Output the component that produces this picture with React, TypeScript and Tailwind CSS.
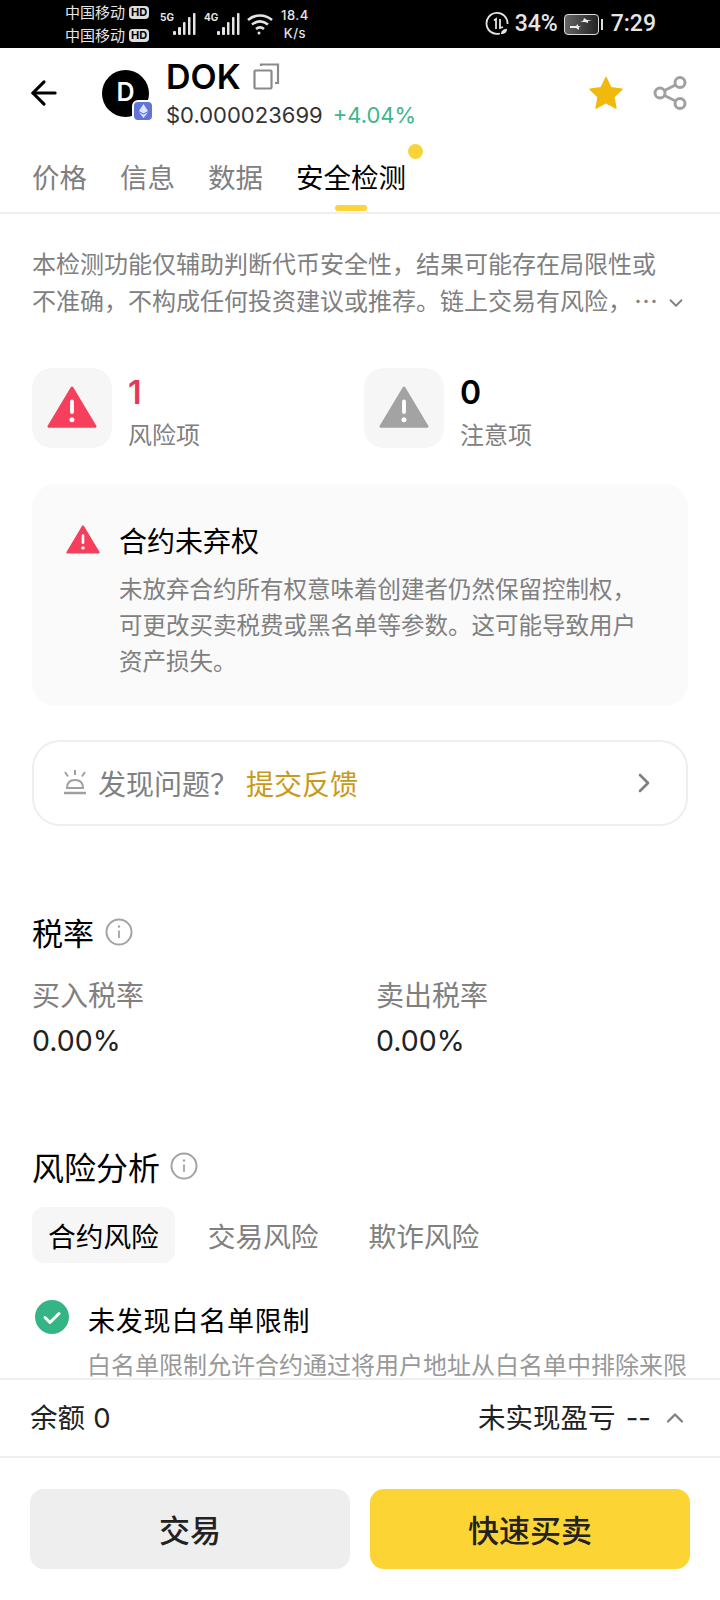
import { ArrowLeft, ChevronDown, ChevronRight, ChevronUp } from "lucide-react";

const cjk = "font-['Noto_Sans_CJK_SC','Noto_Sans',sans-serif]";
const latin = "font-['Inter','Noto_Sans_CJK_SC',sans-serif]";

function Warn({ size, color = "#f53f5c" }: { size: number; color?: string }) {
  return (
    <svg width={size} height={(size * 45) / 52} viewBox="0 0 52 45">
      <path d="M26 2 L50 42 H2 Z" fill={color} stroke={color} strokeWidth="3" strokeLinejoin="round" />
      <rect x="24" y="14" width="4" height="15" rx="2" fill="#fff" />
      <circle cx="26" cy="35" r="2.6" fill="#fff" />
    </svg>
  );
}

function Info() {
  return (
    <svg width="28" height="28" viewBox="0 0 28 28" fill="none" stroke="#a3a3a3" strokeWidth="2">
      <circle cx="14" cy="14" r="12.5" />
      <path d="M14 12.5V20" strokeWidth="1.8" />
      <circle cx="14" cy="8.5" r="1.2" fill="#a3a3a3" stroke="none" />
    </svg>
  );
}

function Signal() {
  return (
    <svg width="23" height="22" viewBox="0 0 23 22" fill="#e5e5e5">
      <rect x="0" y="18" width="3" height="4" rx="1" />
      <rect x="5" y="14" width="3" height="8" rx="1" />
      <rect x="10" y="9" width="2.500" height="13" rx="1" />
      <rect x="15" y="4" width="2.500" height="18" rx="1" />
      <rect x="20" y="0" width="2.500" height="22" rx="1" />
    </svg>
  );
}

function Hd() {
  return (
    <span className="rounded-[4px] bg-[#ddd] px-[2px] text-[11px] leading-[13px] font-bold text-black">HD</span>
  );
}

function StatusBar() {
  return (
    <div className={`flex h-12 shrink-0 items-center bg-black pr-[64px] pl-[65px] text-[#e5e5e5] ${latin}`}>
      <div className="flex w-[88px] flex-col gap-[3px] text-[15px] leading-[20px]">
        <div className="flex items-center gap-[4px] whitespace-nowrap">中国移动 <Hd /></div>
        <div className="flex items-center gap-[4px] whitespace-nowrap">中国移动 <Hd /></div>
      </div>
      <span className="mt-[-14px] ml-[7px] w-[13px] text-[10px] font-bold">5G</span>
      <Signal />
      <span className="mt-[-14px] ml-[8px] w-[13px] text-[10px] font-bold">4G</span>
      <Signal />
      <svg className="ml-[6px]" width="28" height="24" viewBox="0 0 28 24" fill="none" stroke="#e5e5e5" strokeWidth="2.6">
        <path d="M2 8c7-6 17-6 24 0" />
        <path d="M6 12.500c5-4 11-4 16 0" />
        <path d="M10 17c2.500-2 5.500-2 8 0" />
        <circle cx="13" cy="21" r="1.500" fill="#e5e5e5" stroke="none" />
      </svg>
      <div className="ml-[7px] flex flex-col items-center text-[13px] leading-[18px] font-medium tracking-[0.5px]">
        <span>18.4</span>
        <span>K/s</span>
      </div>
      <div className="ml-auto flex items-center font-['Roboto',sans-serif] text-[23px] font-medium">
        <svg width="24" height="24" viewBox="0 0 24 24" fill="none" stroke="#e5e5e5" strokeWidth="1.800">
          <path d="M15 21.500A10.500 10.500 0 1 1 22.500 12" />
          <path d="M9 8.500l2-1.500v10M15 7v9l3-1" strokeWidth="1.800" />
          <path d="M16 22c0-3 2-5 6-5 0 3-2 5-6 5z" fill="#e5e5e5" stroke="none" />
        </svg>
        <span className="ml-[6px]">34%</span>
        <div className="ml-[6px] flex h-[21px] w-[35px] items-center justify-center rounded-[4px] border-[1.500px] border-[#ddd] bg-[linear-gradient(90deg,#666,#222)]">
          <svg width="26" height="12" viewBox="0 0 26 12" fill="#eee">
            <path d="M2 8h6l2-2v2h3l-2 1v3l-3-2H2zM12 4l3-1 1-3 3 2h5l-4 1v2l-3-1z" />
          </svg>
        </div>
        <span className="ml-[2px] h-[11px] w-[2px] bg-[#ddd]" />
        <span className="ml-[8px]">7:29</span>
      </div>
    </div>
  );
}

function Header() {
  return (
    <div className="flex h-[90px] shrink-0 items-center pr-[33px] pl-[25px]">
      <ArrowLeft size={38} strokeWidth={2} className="text-black" />
      <div className="relative ml-[39px] flex h-[47px] w-[47px] items-center justify-center rounded-full bg-black">
        <span className={`text-[25px] font-semibold text-white ${latin}`}>D</span>
        <div className="absolute top-[30px] left-[30px] flex h-[22px] w-[22px] items-center justify-center rounded-[6px] border-[2px] border-white bg-[#6274d8]">
          <svg width="9" height="14" viewBox="0 0 9 14" fill="#dfe5ff">
            <path d="M4.500 0L9 7l-4.500 2.500L0 7zM0 8.300l4.500 2.500L9 8.300 4.500 14z" />
          </svg>
        </div>
      </div>
      <div className="ml-[17px] flex flex-col">
        <div className="flex items-center">
          <span className={`text-[34px] leading-[38px] font-semibold text-black ${latin}`}>DOK</span>
          <svg className="ml-[12px]" width="27" height="27" viewBox="0 0 27 27" fill="none" stroke="#8a8a8a" strokeWidth="2.200">
            <rect x="1.500" y="7.500" width="17" height="18" rx="1" />
            <path d="M8 3V1.500h17V20h-3" />
          </svg>
        </div>
        <div className={`mt-[5px] flex items-center text-[22px] leading-[28px] ${latin}`}>
          <span className="text-[#333]">$0.000023699</span>
          <span className="ml-[10px] text-[#3fb58c]">+4.04%</span>
        </div>
      </div>
      <svg className="ml-auto" width="36" height="34" viewBox="0 0 24 23" fill="#f0b90b">
        <path d="M12 1l3.300 7 7.500.9-5.500 5.200 1.400 7.600L12 18l-6.700 3.700 1.400-7.600L1.200 8.900 8.700 8z" stroke="#f0b90b" strokeWidth="1" strokeLinejoin="round" />
      </svg>
      <svg className="ml-[29px]" width="34" height="34" viewBox="0 0 34 34" fill="none" stroke="#a0a0a0" strokeWidth="3">
        <circle cx="7" cy="17" r="5" />
        <circle cx="27" cy="6.500" r="5" />
        <circle cx="27" cy="27.500" r="5" />
        <path d="M11.500 14.500L22.500 9M11.500 19.500L22.500 25" />
      </svg>
    </div>
  );
}

function Tabs() {
  return (
    <div className="relative flex h-[76px] shrink-0 gap-[33px] border-b-2 border-[#eeeeee] pt-[18px] pl-[32px] text-[27.500px] leading-[40px] text-[#808080]">
      <span>价格</span>
      <span>信息</span>
      <span>数据</span>
      <span className="relative text-black">
        安全检测
        <span className="absolute top-[-12px] right-[-17px] h-[15px] w-[15px] rounded-full bg-[#f8d33a]" />
        <span className="absolute top-[49px] left-[39px] h-[6px] w-[32px] rounded-full bg-[#fcd535]" />
      </span>
    </div>
  );
}

function Stat({ value, label, color, warnColor }: { value: string; label: string; color: string; warnColor: string }) {
  return (
    <div className="flex w-[332px] shrink-0 gap-[16px]">
      <div className="flex h-[80px] w-[80px] items-center justify-center rounded-[20px] bg-[#f6f6f6]">
        <Warn size={50} color={warnColor} />
      </div>
      <div className="flex flex-col pt-[3px]">
        <span className={`text-[32px] leading-[44px] font-semibold ${latin}`} style={{ color }}>{value}</span>
        <span className="mt-[3px] text-[24px] leading-[32px] text-[#808080]">{label}</span>
      </div>
    </div>
  );
}

export default function App() {
  return (
    <div className={`flex h-[1600px] w-[720px] flex-col overflow-hidden bg-white ${cjk}`}>
      <StatusBar />
      <Header />
      <Tabs />
      <main className="min-h-0 flex-1 overflow-hidden px-[32px]">
        <div className="relative mt-[30px] text-[24px] leading-[37px] text-[#808080]">
          <p className="whitespace-nowrap">本检测功能仅辅助判断代币安全性，结果可能存在局限性或</p>
          <p className="whitespace-nowrap">不准确，不构成任何投资建议或推荐。链上交易有风险，<span className="ml-[2px]">…</span></p>
          <ChevronDown size={22} strokeWidth={2} className="absolute top-[48px] right-[1px] text-[#808080]" />
        </div>
        <div className="mt-[50px] flex">
          <Stat value="1" label="风险项" color="#e5395a" warnColor="#f53f5c" />
          <Stat value="0" label="注意项" color="#000000" warnColor="#a3a3a3" />
        </div>
        <div className="mt-[34px] h-[222px] rounded-[24px] bg-[#fafafa] pt-[38px] pr-[30px] pl-[34px]">
          <div className="flex items-center gap-[19px]">
            <Warn size={34} />
            <span className="text-[28px] leading-[36px] text-black">合约未弃权</span>
          </div>
          <p className="mt-[12px] ml-[53px] w-[525px] text-[23.500px] leading-[36px] text-[#808080]">
            未放弃合约所有权意味着创建者仍然保留控制权，可更改买卖税费或黑名单等参数。这可能导致用户资产损失。
          </p>
        </div>
        <div className="mt-[34px] flex h-[86px] items-center rounded-[28px] border-2 border-[#eeeeee] pr-[26px] pl-[29px] text-[28px]">
          <svg width="24" height="28" viewBox="0 0 24 28" fill="none" stroke="#a0a0a0" strokeWidth="2">
            <path d="M12 1v5M2 3l3 4.500M22 3l-3 4.500" />
            <path d="M4 19c0-5 3-8 8-8s8 3 8 8z" />
            <path d="M1 24h22" strokeWidth="2.500" />
          </svg>
          <span className="ml-[11px] text-[#808080]">发现问题？</span>
          <span className="ml-[8px] text-[#c99a1a]">提交反馈</span>
          <ChevronRight size={32} strokeWidth={2} className="ml-auto text-[#808080]" />
        </div>
        <div className="mt-[84px] flex items-center gap-[11px]">
          <span className="text-[31px] leading-[44px] text-black">税率</span>
          <Info />
        </div>
        <div className="mt-[20px] flex">
          <div className="w-[344px]">
            <div className="text-[28px] leading-[40px] text-[#808080]">买入税率</div>
            <div className={`mt-[7px] text-[28.500px] leading-[40px] text-[#222] ${latin}`}>0.00%</div>
          </div>
          <div>
            <div className="text-[28px] leading-[40px] text-[#808080]">卖出税率</div>
            <div className={`mt-[7px] text-[28.500px] leading-[40px] text-[#222] ${latin}`}>0.00%</div>
          </div>
        </div>
        <div className="mt-[83px] flex items-center gap-[10px]">
          <span className="text-[32px] leading-[44px] text-black">风险分析</span>
          <Info />
        </div>
        <div className="mt-[19px] flex text-[27.700px] leading-[40px]">
          <span className="flex h-[56px] items-center rounded-[12px] bg-[#f6f6f6] px-[16px] text-black">合约风险</span>
          <span className="flex h-[56px] items-center pl-[33px] text-[#808080]">交易风险</span>
          <span className="flex h-[56px] items-center pl-[50px] text-[#808080]">欺诈风险</span>
        </div>
        <div className="mt-[37px] flex items-start">
          <svg className="ml-[3px]" width="34" height="34" viewBox="0 0 34 34">
            <circle cx="17" cy="17" r="17" fill="#35b586" />
            <path d="M10 17.500l5 5 9-9" fill="none" stroke="#fff" strokeWidth="3" strokeLinecap="round" strokeLinejoin="round" />
          </svg>
          <span className="mt-[2px] ml-[19px] text-[27px] leading-[36px] tracking-[0.800px] text-black">未发现白名单限制</span>
        </div>
        <p className="mt-[8px] ml-[55px] text-[24px] leading-[36px] whitespace-nowrap text-[#999]">
          白名单限制允许合约通过将用户地址从白名单中排除来限
        </p>
      </main>
      <div className="flex h-[78px] shrink-0 items-center border-t-2 border-[#eeeeee] pr-[31px] pl-[30px] text-[27.500px] text-[#222]">
        <span>余额 <span className={`ml-[2px] ${latin}`}>0</span></span>
        <span className="ml-auto">未实现盈亏 <span className={`ml-[4px] ${latin}`}>--</span></span>
        <ChevronUp size={28} strokeWidth={2} className="ml-[10px] text-[#808080]" />
      </div>
      <div className="flex h-[144px] shrink-0 gap-[20px] border-t-2 border-[#eeeeee] pt-[31px] pr-[30px] pl-[30px] text-[31px] leading-[80px] font-medium text-[#222]">
        <div className="h-[80px] w-[320px] rounded-[14px] bg-[#eeeeee] text-center">交易</div>
        <div className="h-[80px] w-[320px] rounded-[14px] bg-[#fcd535] text-center">快速买卖</div>
      </div>
    </div>
  );
}
